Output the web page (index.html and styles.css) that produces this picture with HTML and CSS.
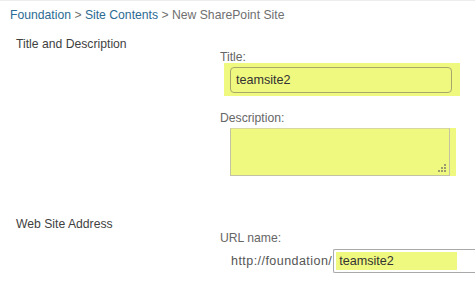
FILE: index.html
```html
<!DOCTYPE html>
<html lang="en">
<head>
<meta charset="utf-8">
<title>New SharePoint Site</title>
<link rel="stylesheet" href="styles.css">
</head>
<body>
<div class="page">
  <div class="breadcrumb">
    <a href="#" class="crumb-link">Foundation</a> &gt; <a href="#" class="crumb-link">Site Contents</a> &gt; New SharePoint Site
  </div>

  <div class="section section-title-desc">
    <div class="section-title">Title and Description</div>
    <div class="section-body">
      <div class="field-label">Title:</div>
      <div class="title-hl">
        <div class="title-input">teamsite2</div>
      </div>
      <div class="field-label desc-label">Description:</div>
      <div class="desc-hl">
        <div class="desc-input">
          <svg class="grip" width="8" height="8" viewBox="0 0 8 8">
            <rect x="6" y="0" width="2" height="2"/>
            <rect x="3" y="3" width="2" height="2"/>
            <rect x="6" y="3" width="2" height="2"/>
            <rect x="0" y="6" width="2" height="2"/>
            <rect x="3" y="6" width="2" height="2"/>
            <rect x="6" y="6" width="2" height="2"/>
          </svg>
        </div>
      </div>
    </div>
  </div>

  <div class="section section-address">
    <div class="section-title">Web Site Address</div>
    <div class="section-body body-address">
      <div class="field-label">URL name:</div>
      <div class="url-row">
        <span class="url-prefix">http://foundation/</span>
        <div class="url-input"><span class="url-mark">teamsite2</span></div>
      </div>
    </div>
  </div>
</div>
</body>
</html>
```

FILE: styles.css
```css
html, body {
  margin: 0;
  padding: 0;
  overflow: hidden;
  background: #ffffff;
}

body {
  font-family: "Liberation Sans", Arial, sans-serif;
  font-size: 12.2px;
  color: #444444;
  width: 475px;
  height: 284px;
}

.page {
  border-top: 1px solid #ececec;
}

.breadcrumb {
  padding: 6px 0 0 10px;
  line-height: 16px;
  color: #6f6f6f;
  white-space: nowrap;
}

.crumb-link {
  color: #2b6b93;
  text-decoration: none;
}

.section {
  display: flex;
  margin-top: 13px;
}

.section-address {
  margin-top: 40px;
}

.section-title {
  flex: 0 0 220px;
  box-sizing: border-box;
  padding-left: 16px;
  line-height: 16px;
  color: #3f3f3f;
}

.section-body {
  flex: 1 1 auto;
  padding-top: 13px;
  min-width: 0;
}

.body-address {
  padding-top: 14px;
}

.field-label {
  line-height: 16px;
  color: #666666;
}

.desc-label {
  margin-top: 14px;
}

.title-hl {
  margin: -2px 0 0 4px;
  width: 236px;
  box-sizing: border-box;
  padding: 4px 8px 3px 6px;
  background: #eff87f;
}

.title-input {
  height: 26px;
  box-sizing: border-box;
  border: 1px solid #a6a86a;
  border-radius: 4px;
  background: #eff87f;
  padding: 0 5px;
  line-height: 24px;
  font-size: 12.6px;
  color: #333333;
}

.desc-hl {
  margin: 2px 0 0 10px;
  width: 226px;
  box-sizing: border-box;
  padding-right: 6px;
  background: #eff87f;
}

.desc-input {
  position: relative;
  height: 48px;
  box-sizing: border-box;
  border: 1px solid #c2c3a4;
  border-top-color: #d6d8a0;
  background: #eff87f;
}

.grip {
  position: absolute;
  right: 3px;
  bottom: 3px;
  fill: #9a9c70;
}

.url-row {
  display: flex;
  align-items: center;
  margin-top: 3px;
  padding-left: 11px;
}

.url-prefix {
  line-height: 16px;
  font-size: 12.5px;
  letter-spacing: 0.45px;
  color: #555555;
  white-space: nowrap;
}

.url-input {
  flex: 0 0 auto;
  width: 160px;
  height: 24px;
  box-sizing: border-box;
  margin-left: 1px;
  border: 1px solid #a9a9a9;
  border-right: none;
  border-radius: 2px 0 0 2px;
  padding: 2px 0 2px 2px;
  background: #ffffff;
}

.url-mark {
  display: block;
  width: 121px;
  height: 18px;
  box-sizing: border-box;
  padding-left: 3px;
  line-height: 18px;
  font-size: 12.6px;
  color: #333333;
  background: #eff87f;
}
```
